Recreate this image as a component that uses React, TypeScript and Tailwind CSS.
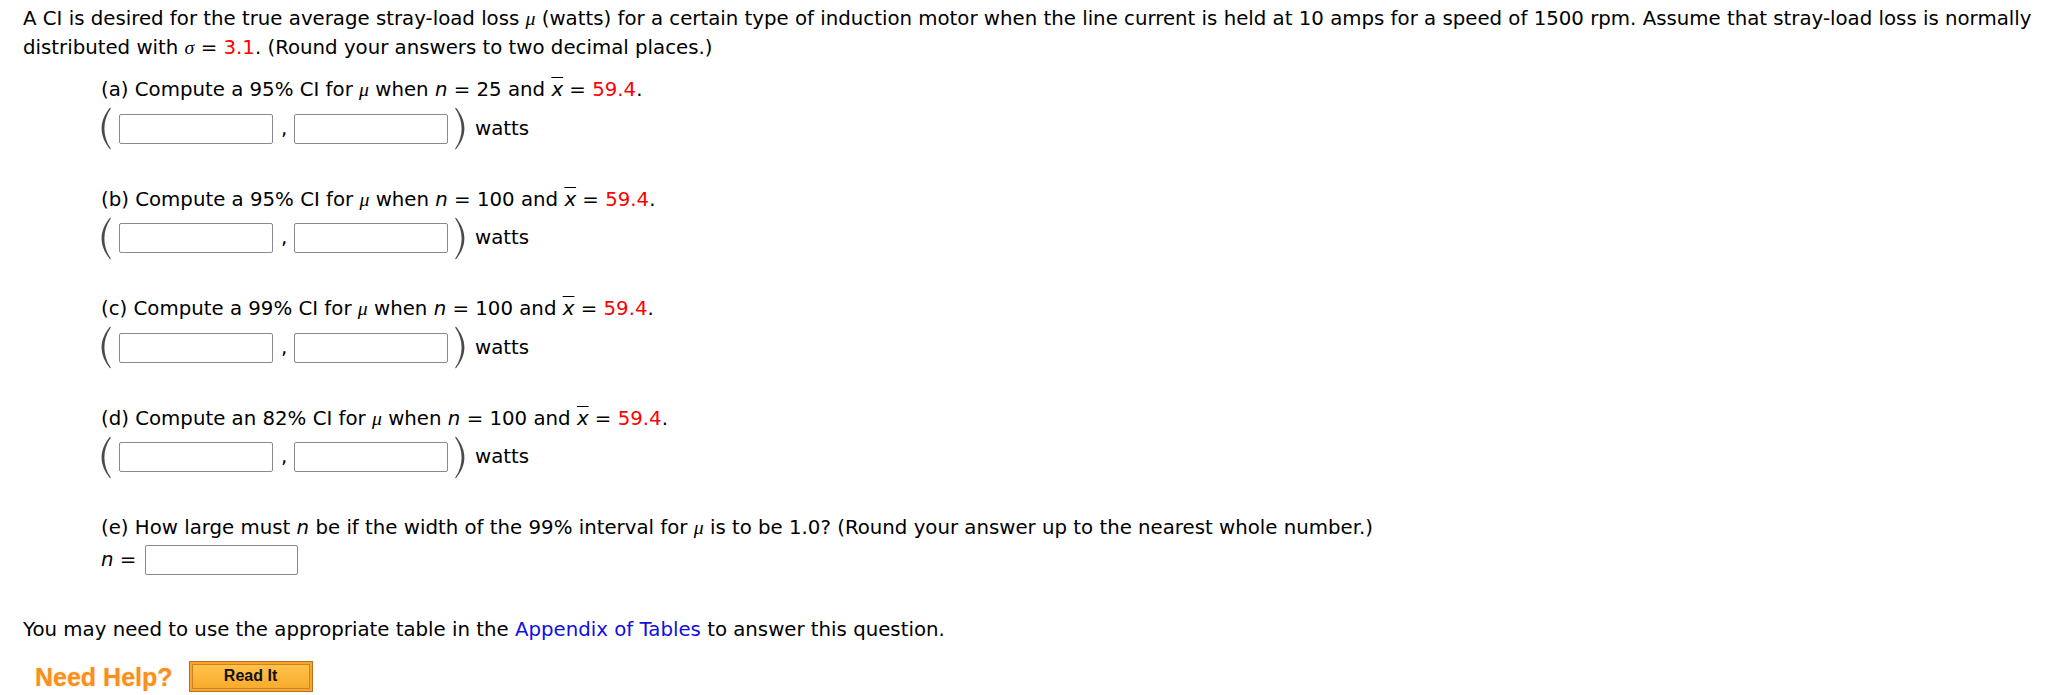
import React from 'react'

const PARTS = [
  { label: '(a)', level: '95%', article: 'a', n: '25' },
  { label: '(b)', level: '95%', article: 'a', n: '100' },
  { label: '(c)', level: '99%', article: 'a', n: '100' },
  { label: '(d)', level: '82%', article: 'an', n: '100' },
]

const serif = { fontFamily: '"Liberation Serif", serif' }

function Mu() {
  return <span className="italic leading-none" style={serif}>μ</span>
}

function Xbar() {
  return <span className="italic overline">x</span>
}

function Paren({ right = false }: { right?: boolean }) {
  return (
    <svg width="10" height="43" viewBox="0 0 10 43" className={right ? '-scale-x-100' : ''}>
      <path
        d="M9.2 0.6 C3.4 7.5 0.6 14.5 0.6 21.5 C0.6 28.5 3.4 35.5 9.2 42.4 L9.8 41.6 C5.2 35 3.4 28.3 3.4 21.5 C3.4 14.7 5.2 8 9.8 1.4 Z"
        fill="#4a4a4a"
      />
    </svg>
  )
}

function Box({ wide = 154 }: { wide?: number }) {
  return (
    <input
      type="text"
      style={{ width: wide }}
      className="h-[30px] border border-[#8a8a8a] rounded-[2px] bg-white outline-none"
    />
  )
}

export default function App() {
  return (
    <div
      className="min-h-screen bg-white text-black text-[19.75px] leading-[28.5px] pl-[23px] pt-[5px]"
      style={{ fontFamily: '"DejaVu Sans", Verdana, sans-serif' }}
    >
      <p>
        A CI is desired for the true average stray-load loss <Mu /> (watts) for a certain type of induction motor
        when the line current is held at 10 amps for a speed of 1500 rpm. Assume that stray-load loss is normally
        distributed with <span className="italic leading-none" style={serif}>σ</span> ={' '}
        <span className="text-[#ff0000]">3.1</span>. (Round your answers to two decimal places.)
      </p>

      <div className="ml-[78px] mt-[14px]">
        {PARTS.map((p) => (
          <div key={p.label} className="mb-[35.5px]">
            <div className="leading-[28px] h-[28px]">
              {p.label} Compute {p.article} {p.level} CI for <Mu /> when <span className="italic">n</span> = {p.n} and{' '}
              <Xbar /> = <span className="text-[#ff0000]">59.4</span>.
            </div>
            <div className="flex items-center mt-[3px] h-[43px]">
              <Paren />
              <div className="ml-[8px]">
                <Box />
              </div>
              <span className="w-[21px] pl-[8px] leading-[28px]">,</span>
              <Box />
              <div className="ml-[7px] flex">
                <Paren right />
              </div>
              <span className="ml-[10px] leading-[28px]">watts</span>
            </div>
          </div>
        ))}

        <div className="leading-[28px] h-[28px] mt-[1px]">
          (e) How large must <span className="italic">n</span> be if the width of the 99% interval for <Mu /> is to be
          1.0? (Round your answer up to the nearest whole number.)
        </div>
        <div className="flex items-center mt-[3px] h-[30px]">
          <span className="leading-[28px]">
            <span className="italic">n</span> =
          </span>
          <div className="ml-[9px]">
            <Box wide={153} />
          </div>
        </div>
      </div>

      <p className="mt-[41px] leading-[28px]">
        You may need to use the appropriate table in the{' '}
        <span className="text-[#1010e0]">Appendix of Tables</span> to answer this question.
      </p>

      <div className="flex items-center mt-[17px] pl-[12px]">
        <span
          className="text-[25px] leading-[30px] font-bold text-[#f7901e]"
          style={{ fontFamily: '"Liberation Sans", Arial, sans-serif', textShadow: '0 0 2px rgba(247,144,30,0.45)' }}
        >
          Need Help?
        </span>
        <button
          type="button"
          className="ml-[16px] w-[124px] h-[31px] border border-[#b8701f] bg-[#f6a531] p-[2px]"
        >
          <div
            className="w-full h-full border border-[#c9831f] bg-gradient-to-b from-[#ffc24a] to-[#f8ab2c] flex items-center justify-center text-[16px] font-bold text-[#111]"
            style={{ fontFamily: '"Liberation Sans", Arial, sans-serif' }}
          >
            Read It
          </div>
        </button>
      </div>
    </div>
  )
}
